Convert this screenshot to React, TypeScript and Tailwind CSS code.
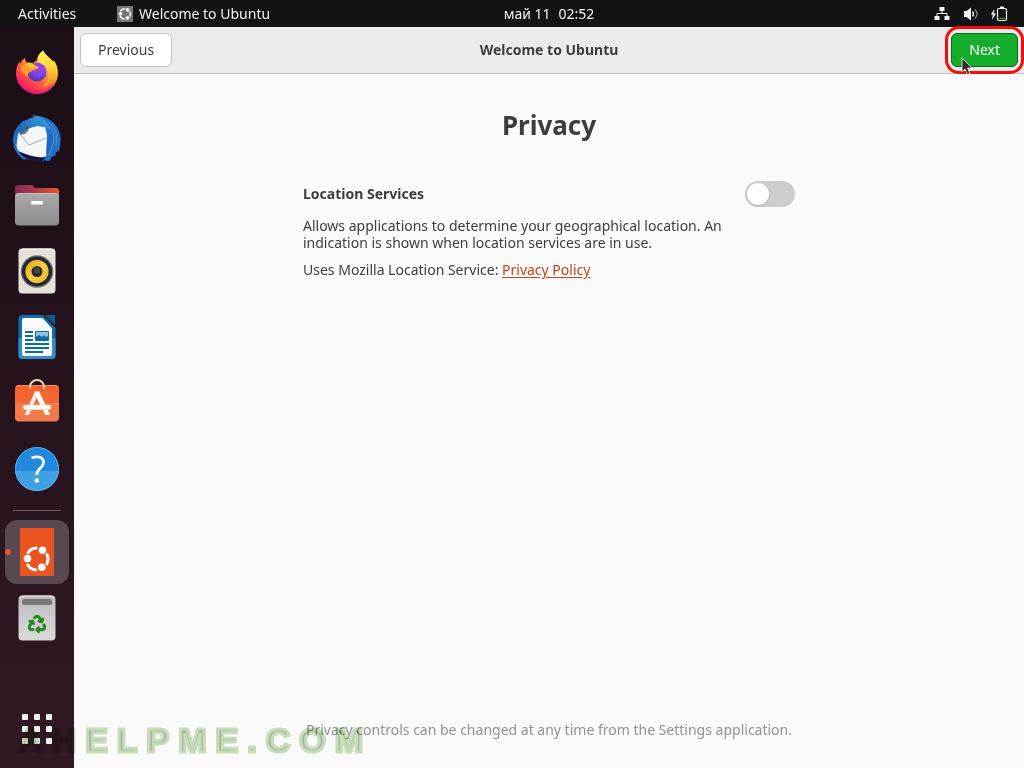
import type { ReactNode } from 'react';
import { FaRecycle } from 'react-icons/fa';

function FirefoxIcon() {
  return (
    <svg viewBox="0 0 48 48" className="size-12" aria-hidden="true">
      <defs>
        <linearGradient id="ff-body" x1="0.85" y1="0.1" x2="0.2" y2="0.95">
          <stop offset="0" stopColor="#fff44f" />
          <stop offset="0.3" stopColor="#ffb22c" />
          <stop offset="0.55" stopColor="#ff7139" />
          <stop offset="0.8" stopColor="#ff3750" />
          <stop offset="1" stopColor="#e5157a" />
        </linearGradient>
        <radialGradient id="ff-globe" cx="0.6" cy="0.2" r="0.9">
          <stop offset="0" stopColor="#a53bf0" />
          <stop offset="0.5" stopColor="#7b48e8" />
          <stop offset="1" stopColor="#4a2ba8" />
        </radialGradient>
        <linearGradient id="ff-tail" x1="0.4" y1="0" x2="0.6" y2="1">
          <stop offset="0" stopColor="#fff350" />
          <stop offset="0.5" stopColor="#ffd43a" />
          <stop offset="1" stopColor="#ff8a2c" />
        </linearGradient>
      </defs>
      <path
        d="M30.3 1.7c1.7 4.2 7 7.3 10 11 .5-.3.4-1.2.2-2 3.5 4.5 4.6 9.5 4.4 14.3C44.5 36.2 35.3 44.8 24 44.8S3 36 3 24.5c0-5 1.4-8.8 3.6-12 0 1 .2 1.7.7 2.3 1-2.5 2.6-4.5 4.8-6 0 2 .4 3.6 1.5 4.9 2.3-.6 4.6-.2 6.6.7 1-1.4 2.3-2.3 4-2.8-.3-4 2.3-7.9 6.1-9.9z"
        fill="url(#ff-body)"
      />
      <path d="M30.3 1.7c1.7 4.2 7 7.3 10 11 3.5 7 3.5 14-1 20-3 3.5-7 5-10 4 5-3 7-7.5 6-12-.8-4-4-7.5-9-9.5-3.500-4.500 0-11 4-13.500z" fill="url(#ff-tail)" />
      <circle cx="24" cy="23" r="9.500" fill="url(#ff-globe)" />
      <path d="M8 18c4-4 8-4.500 12-3 1.200 2 3.200 2.700 6 3-.6 2.300-3.400 2.700-6 3.300-1.800.6-2.200 1.700-3.600 2.300-1.700.6-1.700 2.600-1 4.400C10 26 8 22 8 18z" fill="#ff9a24" />
      <path d="M12 14.600c3-1.500 6-1 8.600.5 1.200 1.800 3 2.400 5.400 2.900-2.300.9-7 .4-9.500 1.600-2-1-3.500-3-4.500-5z" fill="#ffbc35" />
      <path d="M4 27c3 10 11 14.500 20 14.500 8 0 15-4 19-11-2.500 9-9.500 14.300-19 14.300C13 44.800 5 37 4 27z" fill="#e8107c" opacity="0.55" />
    </svg>
  );
}

function ThunderbirdIcon() {
  return (
    <svg viewBox="0 0 48 48" className="size-12" aria-hidden="true">
      <defs>
        <linearGradient id="tb-body" x1="0" y1="0" x2="1" y2="1">
          <stop offset="0" stopColor="#1c63b8" />
          <stop offset="0.5" stopColor="#2277d0" />
          <stop offset="1" stopColor="#1846a0" />
        </linearGradient>
        <linearGradient id="tb-head" x1="0" y1="1" x2="1" y2="0">
          <stop offset="0" stopColor="#1b5cb0" />
          <stop offset="1" stopColor="#38a5e2" />
        </linearGradient>
      </defs>
      <path d="M22 2c13-2 25 8 26 22-1 2-2 3-2 5 0 3-1 6-3 8l-1 4-3 1-2 4-4-1-5 2-3-2C10 47 0 36 0 25 0 17 4 11 10 6l12-4z" fill="url(#tb-body)" />
      <path d="M22 2c10 1 17 8 17 19 0 9-3 16-7 20l1 5 4-1 1-4 4 0 1-4 3-1c1-4 2-8 1-13-2-13-11-22-25-22z" fill="#2370c5" />
      <path d="M3 34c8 6 17 8 29 8l-3 5-5-1C14 45 7 41 3 34z" fill="#1a123d" />
      <path d="M5 19l5-4 14-4 8 1 2 8-1 21c-2 1.500-5 1.500-8 1-8-1-15-4-22-7z" fill="#f5f6f9" />
      <path d="M7 19l9 11 17-7" fill="none" stroke="#a5a8b0" strokeWidth="1" />
      <path d="M2 31c2 7 5 10 10 13" fill="none" stroke="#266fc5" strokeWidth="2.500" />
      <path d="M7 20c0-9 6-17 15-18l-3-2c9 1 17 5 17 14-6-3-11-4-17-2-5 2-7 5-12 8z" fill="url(#tb-head)" />
      <path d="M31 8c7 4 10 9 10 15-1 9-3 13-6 18M35 7c8 6 10 13 8 24" fill="none" stroke="#49a3df" strokeWidth="1.300" opacity="0.6" />
      <path d="M7 20l5-5 4 0-4 4z" fill="#697a87" />
      <circle cx="14" cy="13" r="1.300" fill="#281f36" stroke="#7b7259" strokeWidth="0.700" />
    </svg>
  );
}

function FilesIcon() {
  return (
    <svg viewBox="0 0 48 48" className="size-12" aria-hidden="true">
      <defs>
        <linearGradient id="files-back">
          <stop offset="0" stopColor="#842b58" />
          <stop offset="0.5" stopColor="#b13b45" />
          <stop offset="1" stopColor="#e9562b" />
        </linearGradient>
        <linearGradient id="files-front" x2="0" y2="1">
          <stop offset="0" stopColor="#aaa" />
          <stop offset="1" stopColor="#8c8c8c" />
        </linearGradient>
      </defs>
      <path d="M2 7q0-3 3-3h13q2 0 3 2l1 1h21q3 0 3 3v15H2z" fill="url(#files-back)" />
      <rect x="2" y="12" width="44" height="32.500" rx="4" fill="url(#files-front)" />
      <path d="M3 14.500q.5-2 3-2h36q2.500 0 3 2" fill="none" stroke="#c6c6c6" strokeWidth="0.800" />
      <rect x="18" y="20" width="12" height="3.500" rx="1" fill="#fff" />
    </svg>
  );
}

function RhythmboxIcon() {
  return (
    <svg viewBox="0 0 48 48" className="size-12" aria-hidden="true">
      <defs>
        <linearGradient id="rb-cone" x1="0" y1="0" x2="1" y2="1">
          <stop offset="0" stopColor="#e3a70c" />
          <stop offset="0.5" stopColor="#f5cd4a" />
          <stop offset="1" stopColor="#e9b31c" />
        </linearGradient>
      </defs>
      <rect x="5.500" y="1.500" width="37" height="45" rx="4" fill="#e5e1d8" />
      <path d="M7 4q.5-2 3-2h28q2.500 0 3 2" fill="none" stroke="#fff" />
      <circle cx="24" cy="24.500" r="16.200" fill="#6e7178" />
      <circle cx="24" cy="24.500" r="15" fill="#25272f" />
      <circle cx="24" cy="24.500" r="11.600" fill="url(#rb-cone)" />
      <circle cx="24" cy="24.500" r="5.500" fill="#2a2a2a" />
      <circle cx="24" cy="23.500" r="3" fill="#4a4a4a" />
    </svg>
  );
}

function WriterIcon() {
  return (
    <svg viewBox="0 0 48 48" className="size-12" aria-hidden="true">
      <path d="M9.500 2H30l12.500 13v27.500q0 3.500-4 3.500h-29q-4 0-4-3.500v-37Q5.500 2 9.500 2z" fill="#0c6da8" />
      <path d="M5.500 25h37v17.500q0 3.500-4 3.500h-29q-4 0-4-3.500z" fill="#2f8ec4" />
      <path d="M11 5h18.500L39 15.500V41q0 2-2 2H11q-2 0-2-2V7q0-2 2-2z" fill="#fafafa" />
      <path d="M32 2h10v10z" fill="#0d5b8c" />
      <g fill="#0f69a3">
        <path d="M12 18h8v2h-8zM12 22h8v2h-8zM12 26h8v2h-8zM12 30h24v2H12zM12 34h24v2H12zM12 38h18v2H12z" />
        <rect x="22" y="18" width="14" height="10" rx="1" />
      </g>
      <path d="M23 19h12v8H23z" fill="#8bc6e8" />
      <path d="M23 27v-3l3-2 3 2 2-2 2 2 2-1v4z" fill="#0f69a3" />
    </svg>
  );
}

function SoftwareIcon() {
  return (
    <svg viewBox="0 0 48 48" className="size-12" aria-hidden="true">
      <defs>
        <linearGradient id="bag" x2="0" y2="1">
          <stop offset="0" stopColor="#f4602a" />
          <stop offset="0.490" stopColor="#f26a35" />
          <stop offset="0.500" stopColor="#f47a48" />
          <stop offset="1" stopColor="#f07a4c" />
        </linearGradient>
      </defs>
      <rect x="2" y="6" width="44" height="36.500" rx="4" fill="url(#bag)" />
      <path d="M3 8.500q.5-2 3-2h36q2.500 0 3 2" fill="none" stroke="#f99b75" strokeWidth="0.800" />
      <path d="M17 9.500V8a7 7 0 0 1 14 0v1.500" fill="none" stroke="#ecd8ae" strokeWidth="2" />
      <path d="M22 12.500h4.300L37 36h-4.500L22 16z" fill="#fff" />
      <path d="M22 12.500h4.300L16 36h-4.500z" fill="#fbeee8" />
      <rect x="10" y="26" width="28" height="4.800" rx="2" fill="#fff" stroke="#f2b698" strokeWidth="0.500" />
    </svg>
  );
}

function HelpIcon() {
  return (
    <svg viewBox="0 0 48 48" className="size-12" aria-hidden="true">
      <circle cx="24" cy="24" r="22" fill="#2189db" />
      <path d="M2.100 26h43.800a22 22 0 0 1-43.800 0z" fill="#41a0e3" />
      <circle cx="24" cy="24" r="21.500" fill="none" stroke="#62b5ee" strokeWidth="0.800" />
      <path d="M18.500 13q3-1.300 6-1.200c3.800.2 6 2.200 6 5.600 0 5.700-6.800 5.700-6.800 12.600" fill="none" stroke="#fff" strokeWidth="2.700" />
      <circle cx="23.800" cy="35.500" r="2.300" fill="#fff" />
    </svg>
  );
}

function UbuntuMark() {
  return (
    <g>
      <circle r="11" fill="none" stroke="currentColor" strokeWidth="3" strokeDasharray="12 11.040" strokeDashoffset="-5.500" transform="rotate(180)" />
      <g fill="currentColor">
        <circle cx="-9.500" cy="-0.500" r="3.800" />
        <circle cx="5.500" cy="-8.700" r="3.800" />
        <circle cx="4.800" cy="8.300" r="3.800" />
      </g>
    </g>
  );
}

function UbuntuIcon() {
  return (
    <svg viewBox="0 0 48 48" className="size-12 text-white" aria-hidden="true">
      <path d="M7 0h34v48H7z" fill="#e95420" />
      <g transform="translate(24 31)">
        <UbuntuMark />
      </g>
    </svg>
  );
}

function TrashIcon() {
  return (
    <svg viewBox="0 0 48 48" className="size-12" aria-hidden="true">
      <defs>
        <linearGradient id="trash" x2="0" y2="1">
          <stop offset="0" stopColor="#bdbdbd" />
          <stop offset="1" stopColor="#d9d9d9" />
        </linearGradient>
      </defs>
      <rect x="5.500" y="1.500" width="37" height="45" rx="4" fill="url(#trash)" />
      <path d="M7 4q.5-2 3-2h28q2.500 0 3 2" fill="none" stroke="#eee" />
      <rect x="9" y="5" width="30" height="6" rx="2.500" fill="#777" />
      <FaRecycle x="15" y="21" size={18} color="#24861e" stroke="#24861e" strokeWidth={26} />
    </svg>
  );
}

function NetworkIcon() {
  return (
    <svg viewBox="0 0 16 16" className="size-4 text-[#f2f2f2]" aria-hidden="true">
      <path d="M5.500 1h5v4h-5zM.5 10h5v4h-5zM10.500 10h5v4h-5z" fill="currentColor" />
      <path d="M8 4v4M3 11V7.500h10V11" fill="none" stroke="currentColor" />
    </svg>
  );
}

function VolumeIcon() {
  return (
    <svg viewBox="0 0 16 16" className="size-4 text-[#f2f2f2]" aria-hidden="true">
      <path d="M2 5h2.500L9 1.500v13L4.500 11H2z" fill="currentColor" />
      <path d="M10.500 5.500q2 2.500 0 5" fill="none" stroke="currentColor" strokeWidth="1.300" />
      <path d="M13 3.500q4 4.500 0 9" fill="none" stroke="#888" strokeWidth="1.300" />
    </svg>
  );
}

function BatteryIcon() {
  return (
    <svg viewBox="0 0 18 16" className="h-4 w-[18px] text-[#f2f2f2]" aria-hidden="true">
      <path d="M4.500 3L.8 8.500h2L2 14l4-6.500H4z" fill="currentColor" />
      <rect x="7.500" y="2.500" width="9" height="12" rx="1.500" fill="none" stroke="currentColor" strokeWidth="1.200" />
      <path d="M10 .5h4v2h-4z" fill="currentColor" />
      <path d="M9 12.500h6" stroke="#4e9a06" strokeWidth="1.200" />
    </svg>
  );
}

function DockButton({ label, active, children }: { label: string; active?: boolean; children: ReactNode }) {
  return (
    <button
      type="button"
      aria-label={label}
      className={`relative flex size-16 items-center justify-center rounded-xl ${active ? 'bg-[#584850]' : ''}`}
    >
      {active && <span className="absolute left-0 size-1.5 rounded-full bg-[#e95420]" />}
      {children}
    </button>
  );
}

function TopBar() {
  return (
    <header className="grid h-[27px] shrink-0 grid-cols-[74px_1fr_auto_1fr] items-center bg-[#131313] text-sm whitespace-nowrap text-[#f2f2f2]">
      <button type="button" className="pl-[18px] text-left">Activities</button>
      <button type="button" className="flex items-center gap-1.5 pl-[43px]">
        <svg viewBox="0 0 16 16" className="size-4 text-white" aria-hidden="true">
          <path d="M0 0h16v16H0z" fill="#777" />
          <g transform="translate(8 8) scale(0.48)">
            <UbuntuMark />
          </g>
        </svg>
        Welcome to Ubuntu
      </button>
      <button type="button" className="flex gap-2">
        <span>май 11</span>
        <span>02:52</span>
      </button>
      <div className="flex items-center justify-end gap-3 pr-4">
        <NetworkIcon />
        <VolumeIcon />
        <BatteryIcon />
      </div>
    </header>
  );
}

function Dock() {
  return (
    <nav className="flex w-[74px] shrink-0 flex-col items-center gap-0.5 bg-linear-to-b from-[#1b0e16] via-[#26131d] to-[#301925] pt-3.5 pb-[7px]">
      <DockButton label="Firefox"><FirefoxIcon /></DockButton>
      <DockButton label="Thunderbird"><ThunderbirdIcon /></DockButton>
      <DockButton label="Files"><FilesIcon /></DockButton>
      <DockButton label="Rhythmbox"><RhythmboxIcon /></DockButton>
      <DockButton label="LibreOffice Writer"><WriterIcon /></DockButton>
      <DockButton label="Ubuntu Software"><SoftwareIcon /></DockButton>
      <DockButton label="Help"><HelpIcon /></DockButton>
      <div className="my-[7px] h-px w-12 bg-[#6a5e65]" />
      <DockButton label="Welcome to Ubuntu" active><UbuntuIcon /></DockButton>
      <DockButton label="Trash"><TrashIcon /></DockButton>
      <button type="button" aria-label="Show Applications" className="mt-auto flex size-16 items-center justify-center">
        <span className="grid grid-cols-3 gap-1.5">
          {Array.from({ length: 9 }, (_, i) => (
            <span key={i} className="size-1.5 rounded-[1px] bg-[#f2f2f2]" />
          ))}
        </span>
      </button>
    </nav>
  );
}

function Cursor() {
  return (
    <svg viewBox="0 0 12 19" className="absolute top-6 left-2.5 h-[19px] w-3" aria-hidden="true">
      <path d="M1 1v14l3-3 2.500 5.500 2.500-1L6.500 11H11z" fill="#2d2d2d" stroke="#ddd" strokeWidth="0.900" />
    </svg>
  );
}

function Watermark() {
  return (
    <div className="pointer-events-none absolute bottom-2 left-[18px] flex gap-[9px] font-['Liberation_Sans',sans-serif] text-[34px] leading-10 font-bold text-[#a9b8a4] mix-blend-multiply [-webkit-text-stroke:3px_#cbe2be] [text-shadow:1px_0_#b3bbb1,-1px_0_#b3bbb1,0_1px_#b3bbb1,0_-1px_#b3bbb1,1px_1px_#b3bbb1,-1px_-1px_#b3bbb1,1px_-1px_#b3bbb1,-1px_1px_#b3bbb1]">
      {'AHELPME.COM'.split('').map((letter, i) => (
        <span key={i}>{letter}</span>
      ))}
    </div>
  );
}

export default function App() {
  return (
    <div className="relative flex h-screen flex-col overflow-hidden bg-[#fafafa] font-['Noto_Sans',sans-serif] text-[#3d3d3d]">
      <TopBar />
      <div className="flex min-h-0 flex-1">
        <Dock />
        <div className="flex min-w-0 flex-1 flex-col">
          <div className="grid h-[47px] shrink-0 grid-cols-[1fr_auto_1fr] items-center border-b border-[#bfbfbf] bg-[#ebebeb] px-1.5 text-sm">
            <button type="button" className="h-[34px] justify-self-start rounded-md border border-[#c4c4c4] bg-white px-[17px]">
              Previous
            </button>
            <h2 className="font-bold">Welcome to Ubuntu</h2>
            <div className="relative justify-self-end">
              <button type="button" className="h-[34px] rounded-md border border-[#0d681c] bg-[#15ad2c] px-[17px] text-white">
                Next
              </button>
              <div className="absolute -inset-x-1.5 -inset-y-[7px] rounded-[14px] border-3 border-[#f60c0c]" />
              <Cursor />
            </div>
          </div>
          <main className="mx-auto flex w-full max-w-[492px] flex-1 flex-col pt-[31px] pb-7 text-sm">
            <h1 className="text-center text-[26px] leading-10 font-bold">Privacy</h1>
            <div className="mt-9 flex items-center justify-between">
              <label htmlFor="location" className="font-bold">Location Services</label>
              <input
                id="location"
                type="checkbox"
                role="switch"
                className="h-[26px] w-[50px] appearance-none rounded-full bg-[#cdcdcd] p-0.5 before:block before:size-[22px] before:rounded-full before:bg-white before:shadow-sm checked:bg-[#15ad2c]"
              />
            </div>
            <p className="mt-2.5 max-w-[440px] leading-[17px]">
              Allows applications to determine your geographical location. An indication is shown when location services are in use.
            </p>
            <p className="mt-2.5 leading-[17px]">
              Uses Mozilla Location Service:{' '}
              <a href="#privacy-policy" className="text-[#c7421a] underline underline-offset-2">Privacy Policy</a>
            </p>
            <p className="mt-auto text-center text-[#929292]">
              Privacy controls can be changed at any time from the Settings application.
            </p>
          </main>
        </div>
      </div>
      <Watermark />
    </div>
  );
}
